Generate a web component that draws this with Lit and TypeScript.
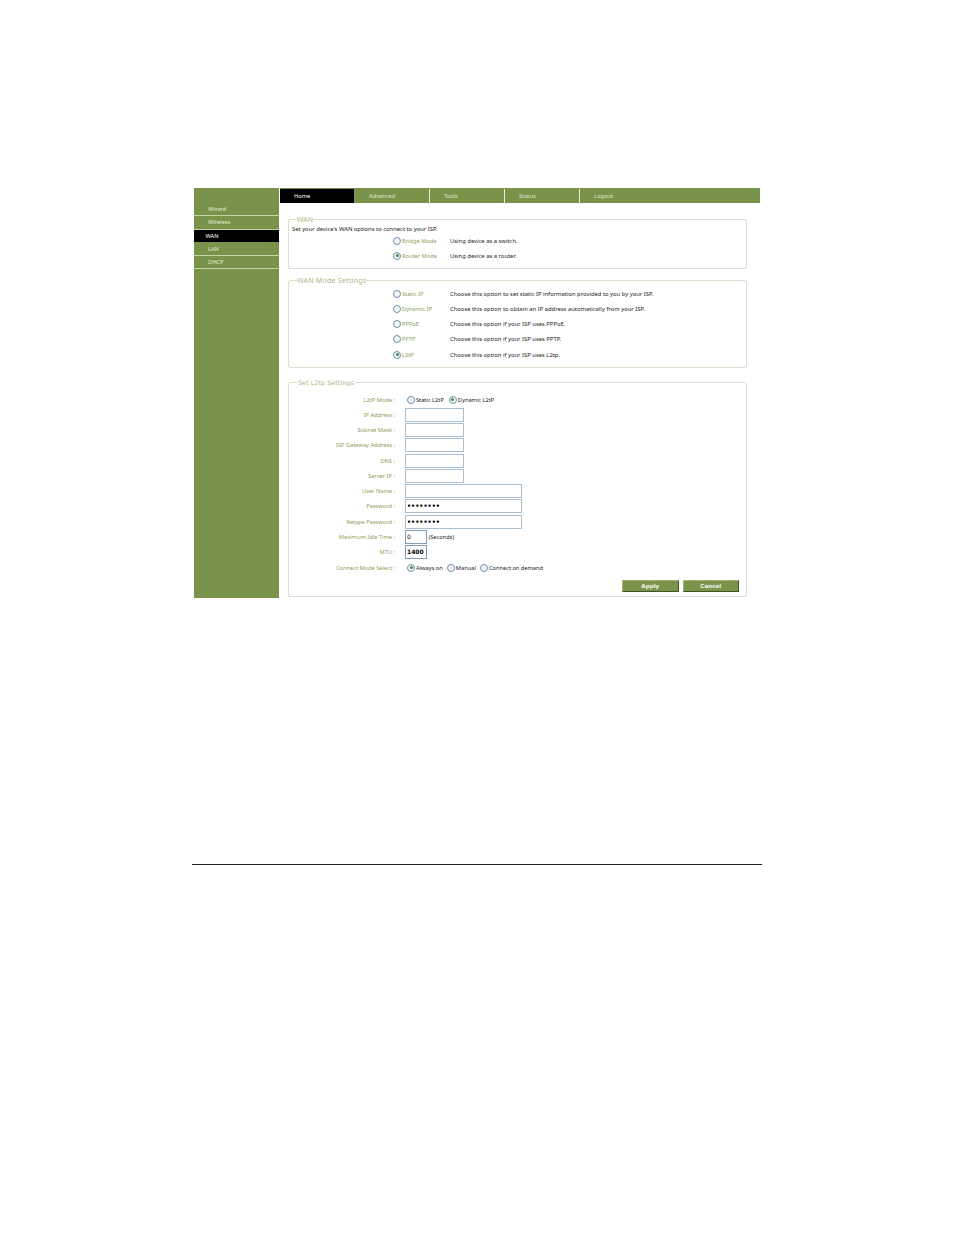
import { LitElement, html, css } from "lit";
import { customElement } from "lit/decorators.js";

const modes1 = [
  ["Bridge Mode", "Using device as a switch.", false],
  ["Router Mode", "Using device as a router.", true],
] as const;
const modes2 = [
  ["Static IP", "Choose this option to set static IP information provided to you by your ISP.", false],
  ["Dynamic IP", "Choose this option to obtain an IP address automatically from your ISP.", false],
  ["PPPoE", "Choose this option if your ISP uses PPPoE.", false],
  ["PPTP", "Choose this option if your ISP uses PPTP.", false],
  ["L2tP", "Choose this option if your ISP uses L2tp.", true],
] as const;
const fields = [
  ["IP Address :", "m", ""],
  ["Subnet Mask :", "m", ""],
  ["ISP Gateway Address :", "m", ""],
  ["DNS :", "m", ""],
  ["Server IP :", "m", ""],
  ["User Name :", "l", ""],
  ["Password :", "l", "••••••••"],
  ["Retype Password :", "l", "••••••••"],
] as const;

@customElement("app-root")
export class AppRoot extends LitElement {
  static styles = css`
    :host { display: block; width: 954px; height: 1235px; background: #fff; overflow: hidden;
      font-family: "Noto Sans", "DejaVu Sans", sans-serif; font-size: 5.7px; color: #222; }
    .page { padding: 188px 0 0 194px; }
    .frame { display: flex; width: 566px; height: 410px; }
    .side { width: 85px; background: #79934b; padding-top: 15px; box-sizing: border-box; flex: none; }
    .side div { height: 13.3px; line-height: 13px; box-sizing: border-box; padding-left: 14px; color: #e6ecd8;
      border-bottom: 1px solid #c5d2ac; }
    .side div.on { background: #000; color: #fff; padding-left: 11.5px; border-bottom-color: #79934b; line-height: 12px; }
    .main { flex: 1; min-width: 0; }
    .nav { display: flex; height: 15px; background: #79934b; margin-left: 1px; padding-top: 1px; box-sizing: border-box; }
    .nav div { width: 75px; padding-left: 14px; box-sizing: border-box; line-height: 14px; color: #dfe7cd;
      border-right: 1px solid #e8eddc; }
    .nav div.on { background: #000; color: #fff; border-right-color: #79934b; }
    .nav div:last-child { border-right: none; }
    .content { padding: 0 13px 0 9px; }
    fieldset { margin: 0; padding: 0; border: 1px solid #dcdfcf; border-radius: 2px; position: relative; box-sizing: border-box; }
    legend { margin-left: 8px; padding: 0; color: #a8bb84; line-height: 7px; }
    .f1 { margin-top: 13px; height: 53px; padding-top: 2px; }
    .f1 legend { font-size: 7px; }
    .f2 { margin-top: 7.5px; height: 91.5px; }
    .f2 legend { font-size: 7px; letter-spacing: 0.25px; }
    .f3 { margin-top: 11px; height: 218px; }
    .f3 legend { font-size: 6.3px; font-family: "DejaVu Sans", sans-serif; padding: 0 1px; font-weight: 400; letter-spacing: 0.1px; }
    .intro { padding-left: 3px; line-height: 8px; font-size: 5.85px; }
    .opts { display: grid; grid-template-columns: 57px 1fr; padding-left: 104px; }
    .f1 .opts { padding-top: 0; grid-auto-rows: 15.3px; }
    .f2 .opts { padding-top: 2.5px; grid-auto-rows: 15.25px; }
    .choice { display: flex; align-items: center; color: #8aa260; }
    .desc { display: flex; align-items: center; color: #222; font-size: 5.85px; white-space: nowrap; }
    .radio { width: 6px; height: 6px; border: 1px solid #6f8fb0; border-radius: 50%; background: #f4f6f8; flex: none;
      display: flex; align-items: center; justify-content: center; margin-right: 1px; }
    .radio.on::after { content: ""; width: 3px; height: 3px; border-radius: 50%; background: #4a8a3c; }
    .form { display: grid; grid-template-columns: 106px 1fr; column-gap: 10px; grid-auto-rows: 15.27px; padding-top: 6px; }
    .lab { text-align: right; color: #8aa260; align-self: center; white-space: nowrap; }
    .val { display: flex; align-items: center; color: #222; }
    .val .radio { margin-left: 2px; }
    .val .t { margin-right: 3px; }
    .val .tt { margin-right: 2px; }
    .input { height: 14px; box-sizing: border-box; border: 1px solid #a9bdd0; background: #fff; padding-left: 1px;
      line-height: 12px; font-family: "DejaVu Sans", sans-serif; font-size: 6px; color: #000; overflow: hidden; }
    .m { width: 59px; }
    .l { width: 117px; }
    .s { width: 22px; }
    .dark { border-color: #7f9db9; }
    .bold { font-weight: 700; }
    .pw { font-size: 6.4px; font-weight: 700; letter-spacing: 0.02px; }
    .btns { display: flex; justify-content: flex-end; gap: 4px; padding: 4.5px 7px 0 0; }
    .btn { width: 56.5px; height: 12px; box-sizing: border-box; background: #79934b; color: #f4f6ec; text-align: center;
      line-height: 11px; font-weight: 700; font-size: 5.6px; font-family: "DejaVu Sans", sans-serif;
      border: 1px solid; border-color: #a0b478 #3f5524 #3f5524 #a0b478; }
    .rule { height: 1px; background: #222; width: 570px; margin: 266px 0 0 -2px; }
  `;

  radio(on: boolean) {
    return html`<span class="radio ${on ? "on" : ""}"></span>`;
  }

  opts(list: readonly (readonly [string, string, boolean])[]) {
    return html`<div class="opts">
      ${list.map(
        ([a, b, on]) => html`<div class="choice">${this.radio(on)}${a}</div><div class="desc">${b}</div>`
      )}
    </div>`;
  }

  render() {
    return html`<div class="page">
      <div class="frame">
        <div class="side">
          <div>Wizard</div><div>Wireless</div><div class="on">WAN</div><div>LAN</div><div>DHCP</div>
        </div>
        <div class="main">
          <div class="nav">
            <div class="on">Home</div><div>Advanced</div><div>Tools</div><div>Status</div><div>Logout</div>
          </div>
          <div class="content">
            <fieldset class="f1">
              <legend>WAN</legend>
              <div class="intro">Set your device's WAN options to connect to your ISP.</div>
              ${this.opts(modes1)}
            </fieldset>
            <fieldset class="f2">
              <legend>WAN Mode Settings</legend>
              ${this.opts(modes2)}
            </fieldset>
            <fieldset class="f3">
              <legend>Set L2tp Settings</legend>
              <div class="form">
                <div class="lab">L2tP Mode :</div>
                <div class="val">${this.radio(false)}<span class="t">Static L2tP</span>${this.radio(true)}<span class="t">Dynamic L2tP</span></div>
                ${fields.map(
                  ([l, size, v]) => html`<div class="lab">${l}</div>
                    <div class="val"><div class="input ${size} ${v ? "pw" : ""}">${v}</div></div>`
                )}
                <div class="lab">Maximum Idle Time :</div>
                <div class="val"><div class="input s dark">0</div><span>&nbsp;(Seconds)</span></div>
                <div class="lab">MTU :</div>
                <div class="val"><div class="input s dark bold">1400</div></div>
                <div class="lab">Connect Mode Select :</div>
                <div class="val">${this.radio(true)}<span class="tt">Always on</span>${this.radio(false)}<span class="tt">Manual</span>${this.radio(false)}<span>Connect on demand</span></div>
              </div>
              <div class="btns"><div class="btn">Apply</div><div class="btn">Cancel</div></div>
            </fieldset>
          </div>
        </div>
      </div>
      <div class="rule"></div>
    </div>`;
  }
}
